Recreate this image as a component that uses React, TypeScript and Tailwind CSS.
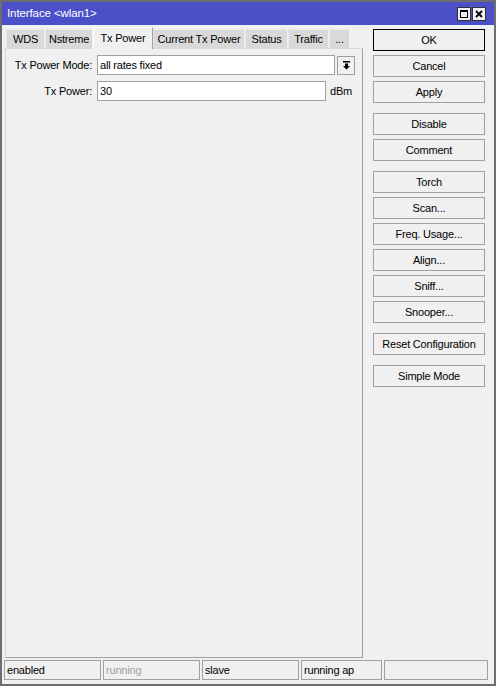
const font = { fontFamily: '"Liberation Sans", Arial, sans-serif' };

const tabs = [
  { t: "WDS", w: "w-[39px]" },
  { t: "Nstreme", w: "w-[48px]" },
  { t: "Tx Power", w: "w-[60px]" },
  { t: "Current Tx Power", w: "w-[92px]" },
  { t: "Status", w: "w-[43px]" },
  { t: "Traffic", w: "w-[41px]" },
  { t: "...", w: "w-[21px]" },
];

const groups: string[][] = [
  ["OK", "Cancel", "Apply"],
  ["Disable", "Comment"],
  ["Torch", "Scan...", "Freq. Usage...", "Align...", "Sniff...", "Snooper..."],
  ["Reset Configuration"],
  ["Simple Mode"],
];

const status = [
  { text: "enabled", w: "w-[97px]", dim: false },
  { text: "running", w: "w-[97px]", dim: true },
  { text: "slave", w: "w-[97px]", dim: false },
  { text: "running ap", w: "w-[81px]", dim: false },
  { text: "", w: "w-[104px]", dim: false },
];

function TitleButtons() {
  return (
    <div className="flex gap-[1px]">
      <div className="w-[14px] h-[14px] bg-[#f0f0f0] border border-[#333] flex items-center justify-center">
        <div className="w-[8px] h-[8px] border border-black border-t-2" />
      </div>
      <div className="w-[14px] h-[14px] bg-[#f0f0f0] border border-[#333] flex items-center justify-center">
        <svg width="8" height="8" viewBox="0 0 8 8">
          <path d="M1 1 L7 7 M7 1 L1 7" stroke="black" strokeWidth="1.8" />
        </svg>
      </div>
    </div>
  );
}

export default function App() {
  return (
    <div
      className="w-[496px] h-[686px] flex flex-col bg-[#f0f0f0] border-2 border-[#6e6e6e] text-[11px] tracking-[-0.2px] text-black"
      style={font}
    >
      <div className="h-[23px] shrink-0 bg-[#4b50c8] flex items-center justify-between pl-[5px] pr-[8px] text-white text-[11.5px] tracking-[-0.1px]">
        <span>Interface &lt;wlan1&gt;</span>
        <TitleButtons />
      </div>

      <div className="flex flex-1 min-h-0">
        <div className="ml-[3px] w-[358px] flex flex-col">
          <div className="h-[23px] shrink-0 flex items-end pl-[1px]">
            {tabs.map(({ t, w }) =>
              t === "Tx Power" ? (
                <div
                  key={t}
                  className={`${w} h-[22px] flex items-center justify-center bg-[#f0f0f0] border-t border-l border-r border-t-white border-l-white border-r-[#a0a0a0] -mb-[1px] relative z-10`}
                >
                  {t}
                </div>
              ) : (
                <div
                  key={t}
                  className={`${w} h-[19px] flex items-center justify-center bg-[#d9d9d9] border-t border-l border-r border-t-[#e8e8e8] border-l-[#e8e8e8] border-r-[#f0f0f0]`}
                >
                  {t}
                </div>
              )
            )}
          </div>
          <div className="flex-1 border-l border-t border-l-[#d9d9d9] border-t-[#d9d9d9] border-r border-b border-r-[#a0a0a0] border-b-[#a0a0a0] pt-[6px] flex flex-col gap-[6px]">
            <div className="flex items-center h-[20px]">
              <div className="w-[86px] text-right">Tx Power Mode:</div>
              <div className="ml-[5px] w-[238px] h-[20px] bg-white border border-[#a0a0a0] flex items-center px-[2px]">
                all rates fixed
              </div>
              <div className="ml-[2px] w-[18px] h-[19px] bg-[#f0f0f0] border border-[#a0a0a0] flex items-center justify-center">
                <svg width="9" height="9" viewBox="0 0 9 9">
                  <rect x="1" y="0" width="7" height="1.5" fill="black" />
                  <path d="M3 2.5 H6 V5 H8 L4.5 8.5 L1 5 H3 Z" fill="black" />
                </svg>
              </div>
            </div>
            <div className="flex items-center h-[20px]">
              <div className="w-[86px] text-right">Tx Power:</div>
              <div className="ml-[5px] w-[229px] h-[20px] bg-white border border-[#a0a0a0] flex items-center px-[2px]">
                30
              </div>
              <span className="ml-[4px]">dBm</span>
            </div>
          </div>
        </div>

        <div className="ml-[10px] w-[112px] pt-[4px] flex flex-col gap-[10px]">
          {groups.map((g, i) => (
            <div key={i} className="flex flex-col gap-[4px]">
              {g.map((b) => (
                <div
                  key={b}
                  className={`h-[22px] flex items-center justify-center bg-[#f0f0f0] border ${
                    b === "OK" ? "border-black" : "border-[#a0a0a0]"
                  }`}
                >
                  {b}
                </div>
              ))}
            </div>
          ))}
        </div>
      </div>

      <div className="h-[20px] shrink-0 mt-[2px] mb-[4px] ml-[2px] flex gap-[2px]">
        {status.map((s, i) => (
          <div
            key={i}
            className={`${s.w} h-[20px] border border-[#a0a0a0] flex items-center px-[2px] ${
              s.dim ? "text-[#a0a0a0]" : ""
            }`}
          >
            {s.text}
          </div>
        ))}
      </div>
    </div>
  );
}
